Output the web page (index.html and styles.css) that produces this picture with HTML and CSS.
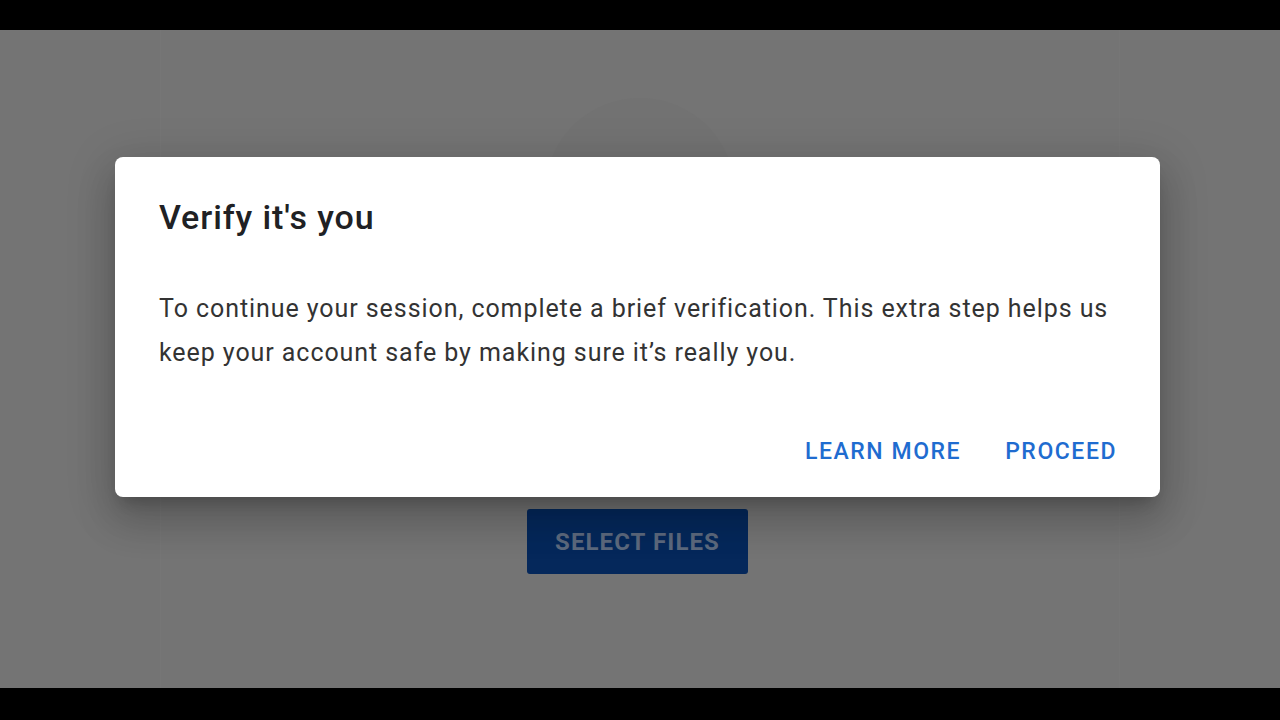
FILE: index.html
```html
<!DOCTYPE html>
<html lang="en">
<head>
<meta charset="utf-8">
<title>Verify it's you</title>
<link rel="stylesheet" href="styles.css">
</head>
<body>
  <div class="screen">
    <main class="page">
      <div class="upload-card">
        <div class="upload-circle"></div>
        <button class="select-btn" type="button">SELECT FILES</button>
      </div>
    </main>
    <div class="scrim">
      <section class="dialog" role="dialog" aria-labelledby="dlg-title">
        <h1 class="dialog-title" id="dlg-title">Verify it's you</h1>
        <p class="dialog-body">To continue your session, complete a brief verification. This extra step helps us keep your account safe by making sure it’s really you.</p>
        <div class="dialog-actions">
          <button class="text-btn" type="button">LEARN MORE</button>
          <button class="text-btn" type="button">PROCEED</button>
        </div>
      </section>
    </div>
  </div>
</body>
</html>
```

FILE: styles.css
```css
html, body {
  margin: 0;
  padding: 0;
  background: #000;
  width: 1280px;
  height: 720px;
  overflow: hidden;
  font-family: Roboto, "Liberation Sans", Arial, sans-serif;
}

.screen {
  margin-top: 30px;
  height: 658px;
  background: #747474;
  position: relative;
}

.page {
  height: 100%;
  display: flex;
  justify-content: center;
}

.upload-card {
  width: 960px;
  margin: 0 auto;
  border-left: 1px solid #767676;
  border-right: 1px solid #767676;
  display: flex;
  flex-direction: column;
  align-items: center;
  padding-top: 68px;
  box-sizing: border-box;
}

.upload-circle {
  width: 190px;
  height: 190px;
  border-radius: 50%;
  background: #727272;
  margin-bottom: 221px;
}

.select-btn {
  width: 221px;
  height: 65px;
  border: none;
  border-radius: 3px;
  background: #05285b;
  color: #5d6a7e;
  font-family: Roboto, "Liberation Sans", Arial, sans-serif;
  font-size: 24px;
  font-weight: 700;
  letter-spacing: 1.1px;
  margin-left: -6px;
  padding: 0 0 0 1px;
}

.scrim {
  position: absolute;
  inset: 0;
  display: flex;
  justify-content: center;
  align-items: flex-start;
  padding-top: 127px;
  padding-right: 5px;
}

.dialog {
  width: 1045px;
  height: 340px;
  box-sizing: border-box;
  background: #fff;
  border-radius: 8px;
  padding: 0 43px 0 44px;
  display: flex;
  flex-direction: column;
  box-shadow: 0 24px 38px 3px rgba(0,0,0,.14), 0 9px 46px 8px rgba(0,0,0,.12), 0 11px 15px -7px rgba(0,0,0,.2);
}

.dialog-title {
  margin: 38px 0 0 0;
  font-size: 34px;
  font-weight: 500;
  line-height: 44px;
  letter-spacing: 0.9px;
  color: #202124;
}

.dialog-body {
  margin: 48px 0 0 0;
  font-size: 25px;
  font-weight: 400;
  line-height: 44px;
  letter-spacing: 0.93px;
  color: #333;
}

.dialog-actions {
  margin-top: auto;
  display: flex;
  justify-content: flex-end;
  gap: 44px;
  padding-bottom: 30px;
}

.text-btn {
  border: none;
  background: none;
  padding: 0;
  font-family: Roboto, "Liberation Sans", Arial, sans-serif;
  font-size: 23px;
  font-weight: 500;
  color: #1f6cd0;
  line-height: 30px;
  letter-spacing: 1.55px;
}
```
